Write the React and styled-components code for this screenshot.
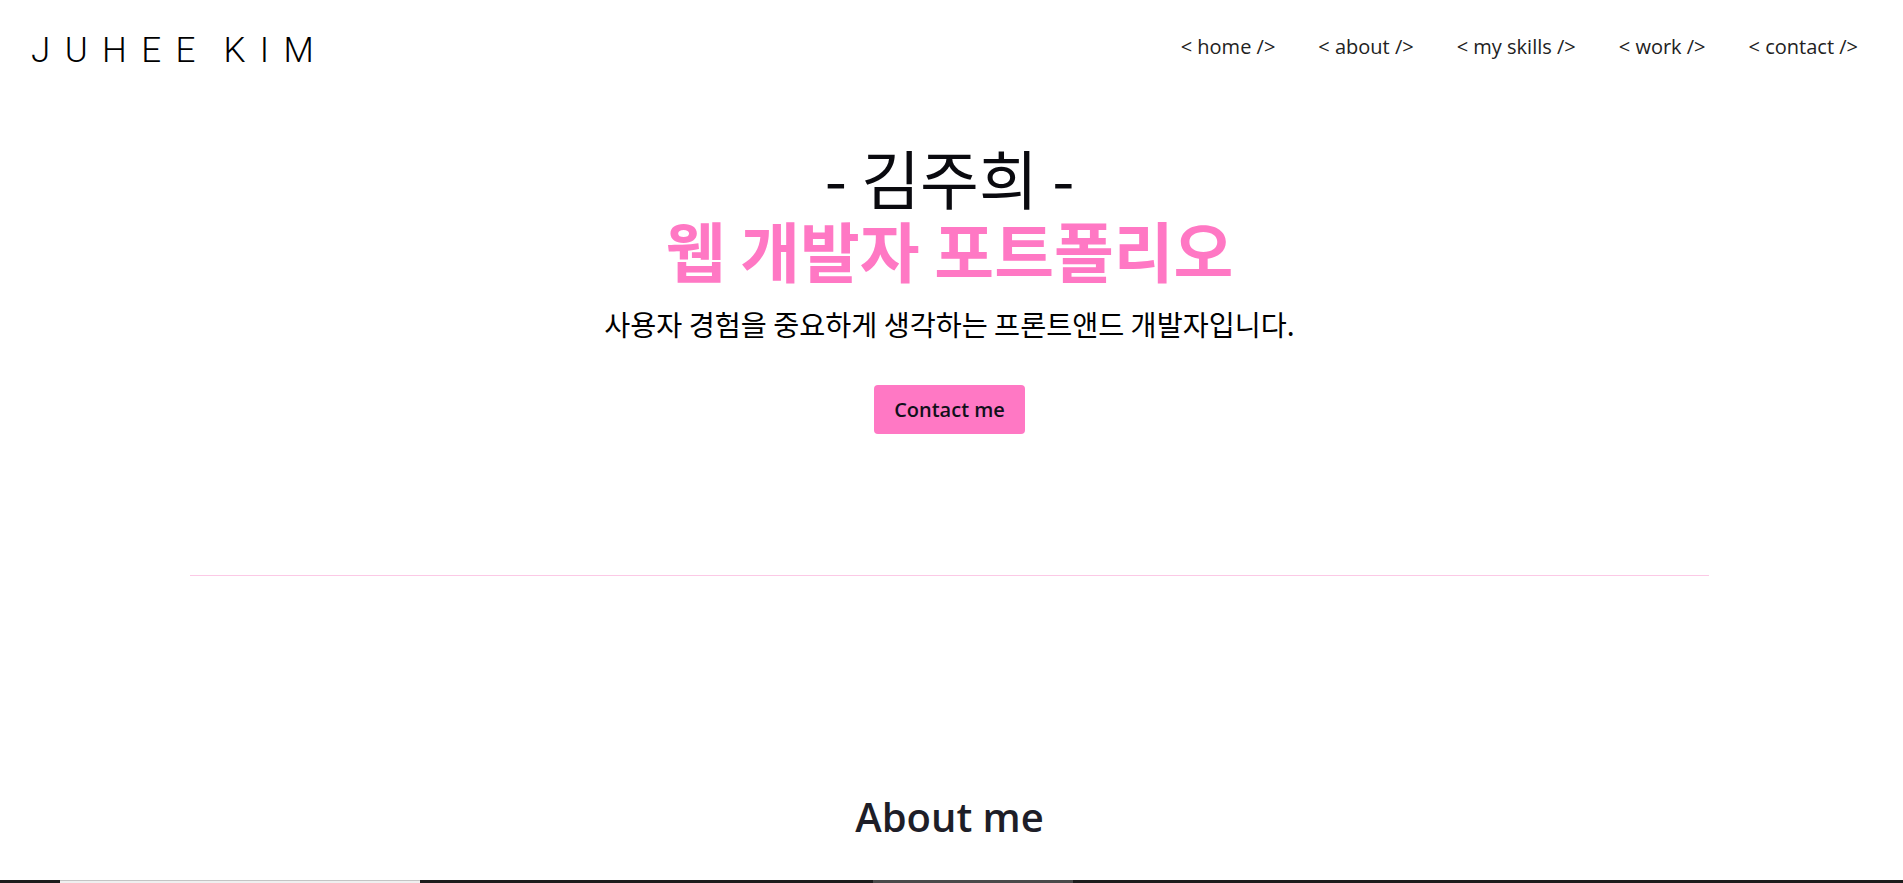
import React from "react";
import styled, { createGlobalStyle } from "styled-components";

const PINK = "#ff78c4";

const GlobalStyle = createGlobalStyle`
  * { box-sizing: border-box; }
  html, body { margin: 0; padding: 0; background: #fff; }
  body {
    padding-right: 4px;
    font-family: "Open Sans", "Noto Sans CJK KR", sans-serif;
    color: #000;
  }
  ::-webkit-scrollbar { width: 4px; }
  ::-webkit-scrollbar-track { background: #f0f0f0; }
  ::-webkit-scrollbar-thumb { background: #c1c1c1; }
`;

const navItems = ["home", "about", "my skills", "work", "contact"];

function App() {
  return (
    <>
      <GlobalStyle />
      <Header>
        <Logo>JUHEE KIM</Logo>
        <Nav>
          {navItems.map((item) => (
            <NavLink key={item} href={`#${item.replace(" ", "-")}`}>
              {`< ${item} />`}
            </NavLink>
          ))}
        </Nav>
      </Header>

      <Hero id="home">
        <Title>
          <Name>- 김주희 -</Name>
          <Role>웹 개발자 포트폴리오</Role>
        </Title>
        <Intro>사용자 경험을 중요하게 생각하는 프론트앤드 개발자입니다.</Intro>
        <ContactButton>Contact me</ContactButton>
      </Hero>

      <Divider />

      <Section id="about" $minHeight={1200}>
        <SectionTitle>About me</SectionTitle>
      </Section>
      <Section id="my-skills" $minHeight={1100}>
        <SectionTitle>My skills</SectionTitle>
      </Section>
      <Section id="work" $minHeight={1100}>
        <SectionTitle>Work</SectionTitle>
      </Section>
      <Section id="contact" $minHeight={700}>
        <SectionTitle>Contact</SectionTitle>
      </Section>

      <TaskbarEdge>
        <TaskSlot $left={60} $width={360} $active />
        <TaskSlot $left={873} $width={200} $open />
      </TaskbarEdge>
    </>
  );
}

export default App;

const Header = styled.header`
  display: flex;
  justify-content: space-between;
  align-items: flex-start;
  height: 96px;
  padding: 30px 41px 0 31px;
`;

const Logo = styled.div`
  font-family: "Roboto", sans-serif;
  font-weight: 300;
  font-size: 35px;
  line-height: 41px;
  letter-spacing: 0.41em;
  word-spacing: -0.26em;
  color: #000;
`;

const Nav = styled.nav`
  display: flex;
  gap: 43px;
  margin-top: 3px;
`;

const NavLink = styled.a`
  font-size: 20px;
  line-height: 27px;
  color: #222;
  text-decoration: none;
  white-space: pre;
`;

const Hero = styled.section`
  display: flex;
  flex-direction: column;
  align-items: center;
  padding-top: 44px;
  text-align: center;
`;

const Title = styled.h1`
  margin: 0;
  display: flex;
  flex-direction: column;
  align-items: center;
  font-family: "Noto Sans CJK KR", sans-serif;
  line-height: 73px;
`;

const Name = styled.span`
  font-size: 64px;
  font-weight: 400;
  color: #0a0a0f;
`;

const Role = styled.span`
  font-size: 65px;
  font-weight: 700;
  color: ${PINK};
`;

const Intro = styled.p`
  margin: 20px 0 0;
  font-family: "Noto Sans CJK KR", sans-serif;
  font-size: 28.3px;
  line-height: 36px;
  color: #000;
`;

const ContactButton = styled.button`
  margin-top: 43px;
  padding: 11px 20px;
  border: none;
  border-radius: 4px;
  background: ${PINK};
  font-family: "Open Sans", sans-serif;
  font-size: 20px;
  font-weight: 600;
  line-height: 27px;
  color: #10101a;
  cursor: pointer;
`;

const Divider = styled.hr`
  width: 80%;
  margin: 141px auto 0;
  border: none;
  border-top: 1px solid #fcc9e6;
`;

const Section = styled.section`
  min-height: ${({ $minHeight }) => $minHeight}px;
  display: flex;
  flex-direction: column;
  align-items: center;
  padding-top: 214px;
`;

const SectionTitle = styled.h2`
  margin: 0;
  font-size: 40px;
  font-weight: 600;
  line-height: 54px;
  color: #1e1e28;
`;

const TaskbarEdge = styled.div`
  position: fixed;
  left: 0;
  right: 0;
  bottom: 0;
  height: 3px;
  background: #1c1c1c;
`;

const TaskSlot = styled.div`
  position: absolute;
  top: 0;
  bottom: 0;
  left: ${({ $left }) => $left}px;
  width: ${({ $width }) => $width}px;
  background: ${({ $active }) => ($active ? "#efefef" : "#4a4a4a")};
  border-top: ${({ $active }) => ($active ? "1px solid #c4c4c4" : "none")};
`;
